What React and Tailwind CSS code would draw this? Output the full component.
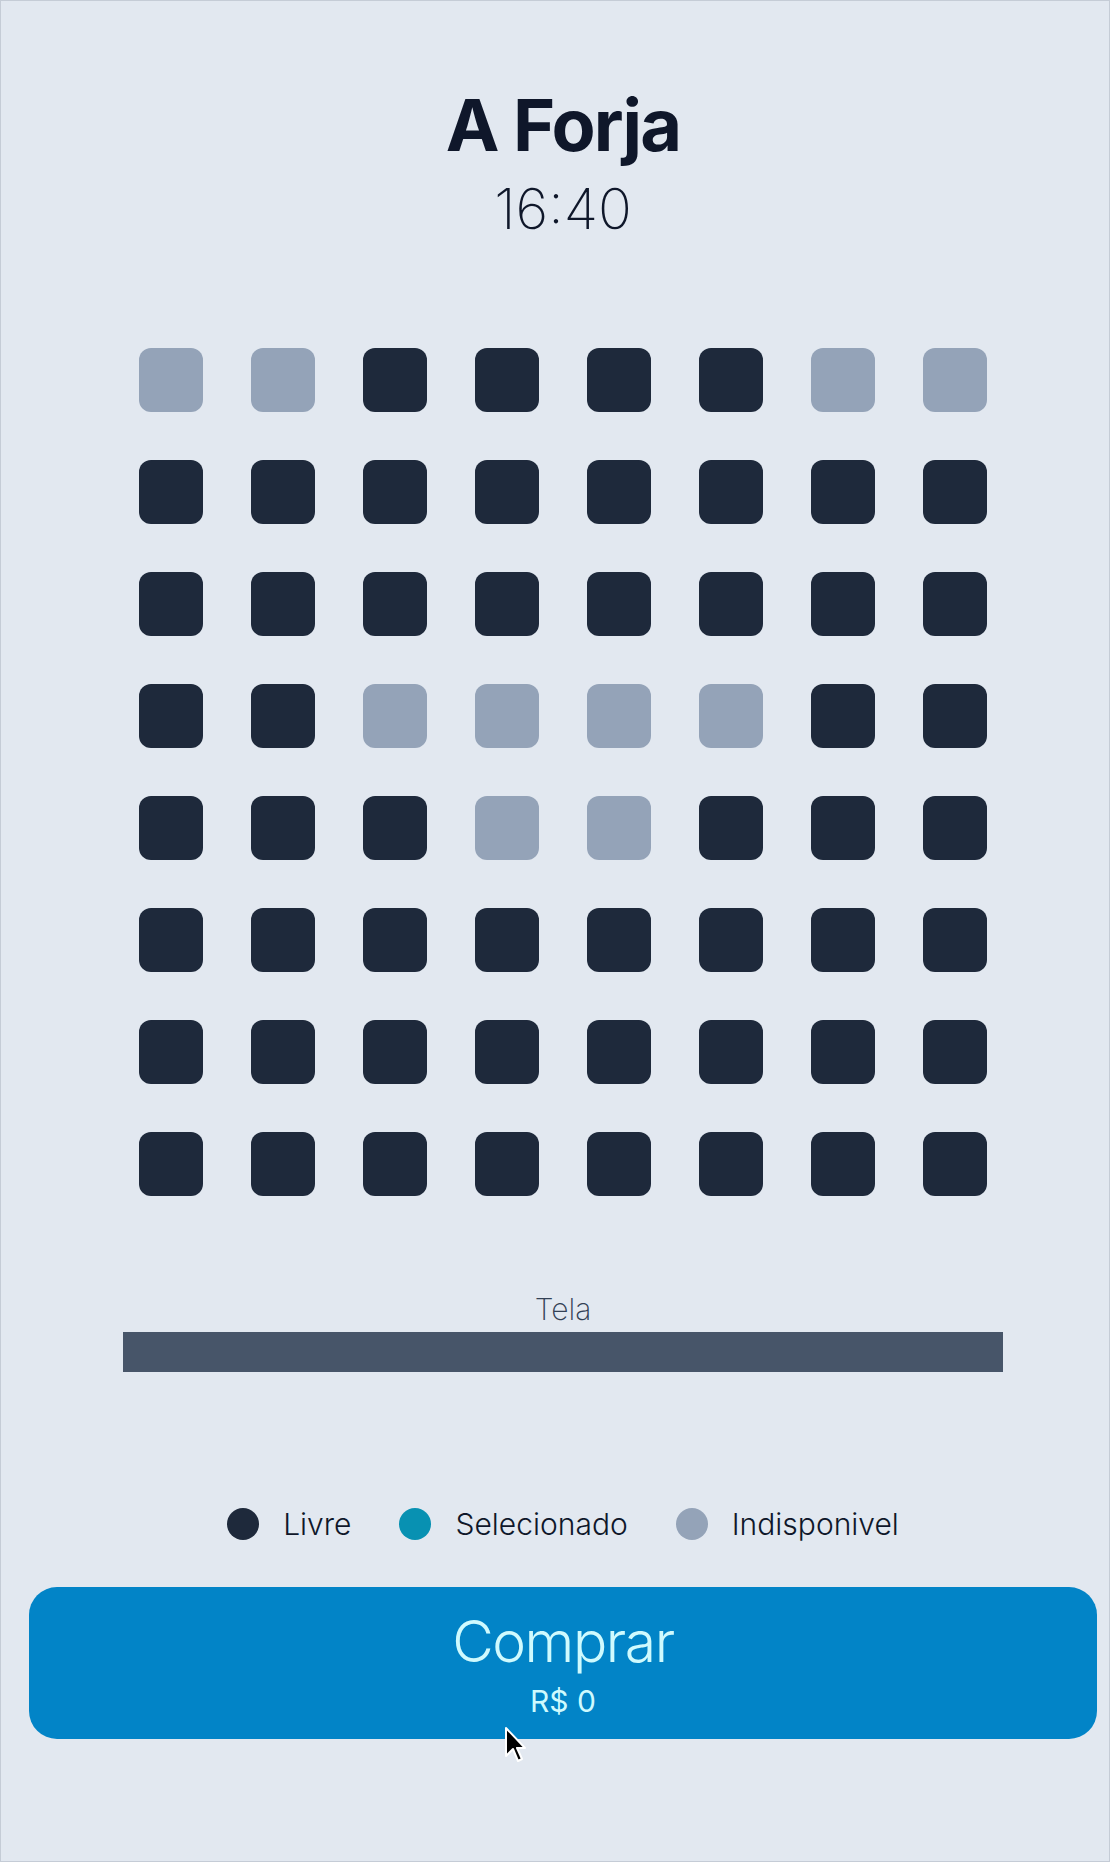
import React from 'react';

// F = free, U = unavailable
const SEATS = [
  'UUFFFFUU',
  'FFFFFFFF',
  'FFFFFFFF',
  'FFUUUUFF',
  'FFFUUFFF',
  'FFFFFFFF',
  'FFFFFFFF',
  'FFFFFFFF',
];

const seatClass = (s) =>
  s === 'U' ? 'bg-[#94a3b8]' : s === 'S' ? 'bg-[#0891b2]' : 'bg-[#1e293b]';

const Legend = ({ color, label }) => (
  <div className="flex items-center gap-6">
    <span className={`w-8 h-8 rounded-full ${color}`} />
    <span className="text-[30px] leading-none font-light text-[#0f172a]">{label}</span>
  </div>
);

export default function App() {
  return (
    <div
      className="relative w-[1110px] h-[1862px] bg-[#e2e8f0] border border-[#c5ccd6] overflow-hidden"
      style={{ fontFamily: 'Inter, "Noto Sans", sans-serif' }}
    >
      <div className="flex flex-col items-center pl-4 pt-[88px]">
        {/* Header */}
        <h1 className="text-[72px] leading-none font-bold tracking-tight text-[#0f172a]">A Forja</h1>
        <p className="mt-[20px] text-[56px] leading-none font-extralight text-[#0f172a]">16:40</p>

        {/* Seats */}
        <div className="mt-[111px] grid grid-cols-8 gap-12">
          {SEATS.flatMap((row, r) =>
            row.split('').map((s, c) => (
              <div key={`${r}-${c}`} className={`w-16 h-16 rounded-xl ${seatClass(s)}`} />
            ))
          )}
        </div>

        {/* Screen */}
        <p className="mt-[98px] text-[30px] leading-none font-extralight text-[#334155]">Tela</p>
        <div className="mt-2 w-[880px] h-10 bg-[#475569]" />

        {/* Legend */}
        <div className="mt-[136px] flex items-center gap-12">
          <Legend color="bg-[#1e293b]" label="Livre" />
          <Legend color="bg-[#0891b2]" label="Selecionado" />
          <Legend color="bg-[#94a3b8]" label="Indisponivel" />
        </div>

        {/* Buy button */}
        <button className="mt-[47px] w-[1068px] h-[152px] rounded-[28px] bg-[#0284c7] flex flex-col items-center pt-[26px]">
          <span className="text-[57px] leading-none font-light tracking-tight text-[#cffafe]">Comprar</span>
          <span className="mt-4 text-[30px] leading-none font-normal text-[#cffafe]">R$ 0</span>
        </button>
      </div>

      {/* mouse cursor */}
      <svg className="absolute left-[503px] top-[1725px]" width="22" height="38" viewBox="0 0 22 38">
        <path d="M2 2 L2 30 L9 23 L14 35 L18 33 L13 22 L21 22 Z" fill="#000" stroke="#fff" strokeWidth="2" strokeLinejoin="round" />
      </svg>
    </div>
  );
}
